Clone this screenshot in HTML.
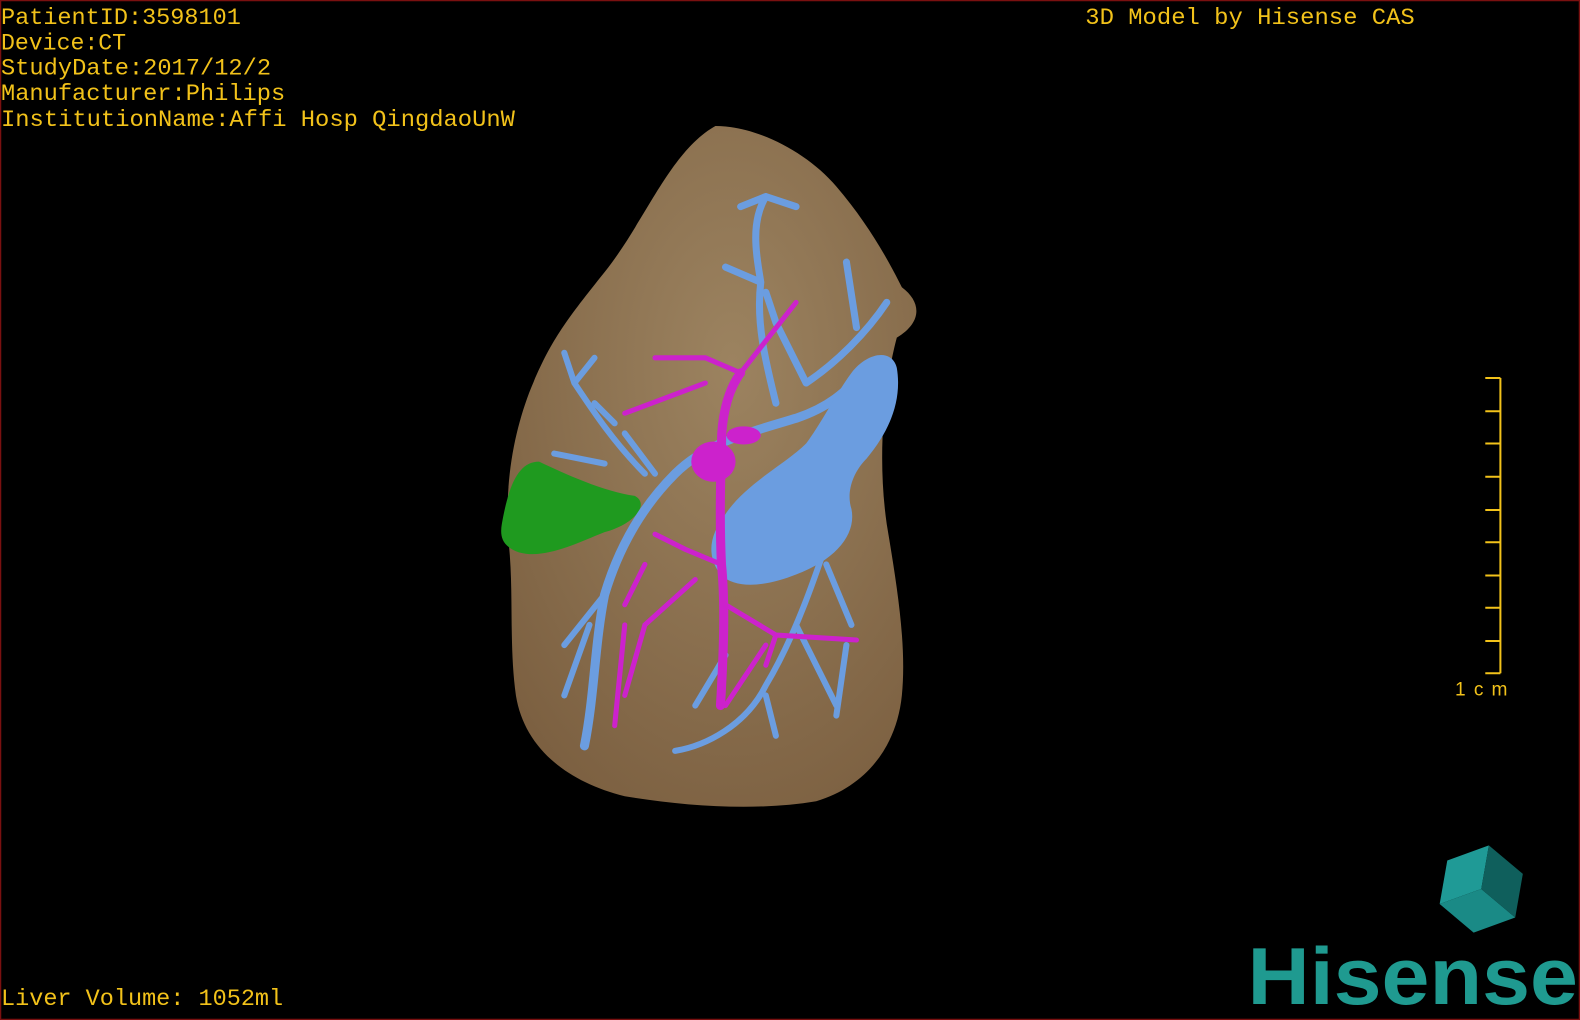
<!DOCTYPE html>
<html><head><meta charset="utf-8"><style>
html,body{margin:0;padding:0;background:#000;width:1580px;height:1020px;overflow:hidden}
svg{display:block}
.m{font-family:"Liberation Mono",monospace}
</style></head><body>
<svg width="1580" height="1020" viewBox="0 0 1568 1012" preserveAspectRatio="none">
<rect x="0.5" y="0.5" width="1567" height="1011" fill="#000" stroke="#7a1010" stroke-width="1.5"/>
<g fill="#f2c21a" font-size="23" class="m">
<text x="1" y="24" textLength="238" lengthAdjust="spacingAndGlyphs">PatientID:3598101</text>
<text x="1" y="49">Device:CT</text>
<text x="1" y="74" textLength="268" lengthAdjust="spacingAndGlyphs">StudyDate:2017/12/2</text>
<text x="1" y="99" textLength="282" lengthAdjust="spacingAndGlyphs">Manufacturer:Philips</text>
<text x="1" y="125" textLength="510" lengthAdjust="spacingAndGlyphs">InstitutionName:Affi Hosp QingdaoUnW</text>
<text x="1077" y="24" textLength="327" lengthAdjust="spacingAndGlyphs">3D Model by Hisense CAS</text>
<text x="1" y="997" textLength="280" lengthAdjust="spacingAndGlyphs">Liver Volume: 1052ml</text>
</g>
<text x="1444" y="690" style="font-family:'Liberation Sans',sans-serif" font-size="19" fill="#f2c21a" textLength="52" lengthAdjust="spacing">1cm</text>
<g stroke="#f2c21a" stroke-width="2" fill="none">
<path d="M1489 375V668M1474 375H1489M1474 668H1489M1474 408H1489M1474 440H1489M1474 473H1489M1474 506H1489M1474 538H1489M1474 571H1489M1474 603H1489M1474 636H1489"/>
</g>
<defs><radialGradient id="lg" cx="0.55" cy="0.35" r="0.75"><stop offset="0" stop-color="#9c8360"/><stop offset="1" stop-color="#7b5f40"/></radialGradient></defs>
<path d="M710 125C750 125 800 150 830 185C860 220 880 255 895 285C915 300 915 320 890 335C878 380 870 450 880 520C890 580 900 640 895 690C890 740 860 780 810 795C750 805 680 800 620 790C560 775 520 740 512 690C505 640 510 590 505 540C500 480 510 430 525 390C545 340 560 320 600 270C640 220 665 150 710 125Z" fill="url(#lg)"/>
<path d="M498 520C505 480 515 458 535 458C560 470 600 488 630 492C645 500 630 520 600 528C570 540 540 555 515 548C498 542 496 532 498 520Z" fill="#1f9a1f"/>
<g stroke="#6b9de0" fill="none" stroke-linecap="round">
<path stroke-width="9" d="M580 740C590 690 590 640 600 590C615 540 640 500 670 470C700 440 740 430 790 415C820 405 840 390 860 365" />
<path stroke-width="7" d="M770 400C760 360 750 320 755 280C750 250 745 220 760 195M755 280L720 265M760 195L735 205M760 195L790 205M800 380C830 360 860 330 880 300M850 325L840 260M800 380L770 320L760 290"/>
<path stroke-width="6" d="M640 470C610 440 590 410 570 380M570 380L560 350M570 380L590 355M600 460L550 450M650 470L620 430M610 420L590 400"/>
<path stroke-width="6" d="M830 510C810 570 790 630 760 680C740 720 700 740 670 745M790 620L830 700M760 690L770 730M820 560L845 620M840 640L830 710M600 590L560 640M585 620L560 690M720 650L690 700"/>
</g>
<path d="M720 510C740 480 780 460 800 440C815 420 830 390 845 370C860 350 885 345 890 365C895 395 885 425 860 455C845 470 840 490 845 505C850 530 830 555 790 570C760 582 730 585 715 570C700 550 705 530 720 510Z" fill="#6b9de0"/>
<g stroke="#cc22cc" fill="none" stroke-linecap="round">
<path stroke-width="9" d="M715 700C718 650 720 600 716 560C714 520 715 480 716 440C716 420 720 390 735 370"/>
<path stroke-width="5" d="M735 370L790 300M735 370L700 355L650 355M700 380L620 410M716 560L680 545L650 530M690 575L640 620L620 690M720 600L770 630L850 635M770 630L760 660M640 560L620 600M760 640L720 700M620 620L610 720"/>
</g>
<ellipse cx="708" cy="458" rx="22" ry="20" fill="#cc22cc"/>
<ellipse cx="738" cy="432" rx="17" ry="9" fill="#cc22cc"/>
<g transform="translate(1470,882) rotate(-50)">
<polygon points="-38,-22 0,-44 38,-22 0,0" fill="#1f9a96"/>
<polygon points="-38,-22 0,0 0,44 -38,22" fill="#1a8a86"/>
<polygon points="38,-22 0,0 0,44 38,22" fill="#0f5f5c"/>
</g>
<text x="1238" y="996" style="font-family:'Liberation Sans',sans-serif;font-weight:bold" font-size="80" fill="#1f9a90" textLength="328" lengthAdjust="spacingAndGlyphs">Hisense</text>
</svg>
</body></html>
